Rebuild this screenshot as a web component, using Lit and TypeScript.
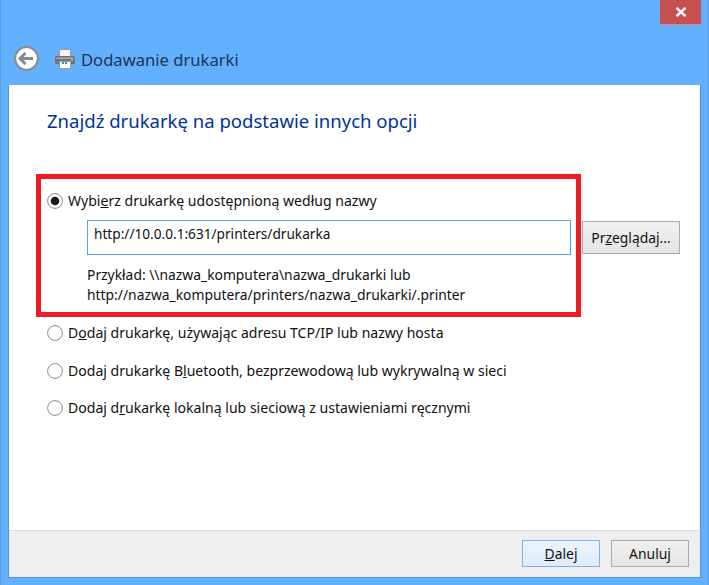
import { LitElement, html, css, svg } from "lit";
import { customElement } from "lit/decorators.js";

@customElement("app-root")
export class AppRoot extends LitElement {
  static styles = css`
    :host { display: block; width: 709px; height: 585px; overflow: hidden; font-family: "Noto Sans", "Open Sans", sans-serif; }
    .win { box-sizing: border-box; width: 709px; height: 585px; background: #63b0fe; border-left: 1px solid #5a9fe0; border-right: 1px solid #5a9fe0; display: flex; flex-direction: column; }
    .titlebar { height: 25px; display: flex; justify-content: flex-end; padding-right: 7px; flex: none; }
    .close { width: 41px; height: 25px; background: #c75050; border-bottom: 1px solid #d98a8a; box-sizing: border-box; display: flex; align-items: center; justify-content: center; }
    .nav { height: 60px; flex: none; display: flex; align-items: center; padding: 7px 0 0 13px; box-sizing: border-box; }
    .back { width: 25px; height: 25px; display: block; }
    .printer { width: 20px; height: 20px; margin-left: 16px; display: block; }
    .nav-title { font-size: 16.6px; color: #1f3550; margin-left: 6px; margin-top: 2px; }
    .panel { flex: 1; margin: 0 7px 7px 7px; background: #fff; border: 1px solid #4f93d8; border-top: none; display: flex; flex-direction: column; position: relative; }
    .body { flex: 1; padding: 21px 0 0 38px; box-sizing: border-box; }
    h1 { margin: 0; font-weight: 400; font-size: 18.55px; line-height: 30px; color: #003399; }
    .rows { margin-top: 55px; display: flex; flex-direction: column; }
    .opt { display: flex; align-items: center; gap: 5px; font-size: 14.05px; line-height: 20px; color: #111; height: 20px; }
    .radio { width: 16px; height: 16px; flex: none; display: block; }
    u { text-underline-offset: 1px; text-decoration-thickness: 1px; }
    .detail { padding-left: 40px; margin-top: 9px; }
    .entry { display: flex; align-items: flex-start; }
    .input { box-sizing: border-box; width: 484px; height: 35px; border: 1px solid #5aa2e6; font-size: 13.65px; padding: 0 6px 8px; display: flex; align-items: center; color: #111; }
    .browse { margin-left: 11px; margin-top: 1px; width: 98px; height: 33px; }
    .btn { box-sizing: border-box; border: 1px solid #acacac; background: linear-gradient(#f0f0f0, #e5e5e5); display: flex; align-items: center; justify-content: center; font-size: 13.9px; color: #111; }
    .hint { margin-top: 10px; font-size: 13.85px; line-height: 20px; color: #111; }
    .rest { display: flex; flex-direction: column; gap: 17.5px; margin-top: 18px; }
    .footer { height: 47px; flex: none; box-sizing: border-box; background: #eeeeee; border-top: 1px solid #dfdfdf; display: flex; justify-content: flex-end; gap: 11px; padding: 9px 11px 0 0; }
    .footer .btn { width: 78px; height: 27px; }
    .primary { border-color: #7eb4ea; background: linear-gradient(#ecf4fc, #dcecfc); }
    .mark { position: absolute; left: 27px; top: 89px; width: 545px; height: 143px; box-sizing: border-box; border: 5px solid #ed1c24; pointer-events: none; }
  `;

  radio(on: boolean) {
    return html`<svg class="radio" viewBox="0 0 16 16">
      <circle cx="8" cy="8" r="7.4" fill="#fff" stroke="#8a8a8a" stroke-width="1"></circle>
      ${on ? svg`<circle cx="8" cy="8" r="4.3" fill="#1a1a1a"></circle>` : ""}
    </svg>`;
  }

  render() {
    return html`
      <div class="win">
        <div class="titlebar">
          <div class="close">
            <svg width="12" height="10" viewBox="0 0 12 10"><path d="M1.5 0.8 L10.5 9.2 M10.5 0.8 L1.5 9.2" stroke="#fff" stroke-width="2.4" fill="none"></path></svg>
          </div>
        </div>
        <div class="nav">
          <svg class="back" viewBox="0 0 25 25">
            <circle cx="12.5" cy="12.5" r="11.4" fill="#fff" stroke="#8c8c8c" stroke-width="2"></circle>
            <path d="M6 12.5 H19 M11.5 7 L6 12.5 L11.5 18" fill="none" stroke="#8a8a8a" stroke-width="3"></path>
          </svg>
          <svg class="printer" viewBox="0 0 20 20">
            <rect x="4.5" y="0.5" width="11" height="7" fill="#f4f4f4" stroke="#9a9a9a"></rect>
            <rect x="0" y="7" width="20" height="8" rx="1.5" fill="#6d7478"></rect>
            <rect x="1.5" y="8.5" width="17" height="1.5" fill="#aab0b3"></rect>
            <rect x="16" y="10.5" width="2" height="1.5" fill="#7fe07f"></rect>
            <rect x="4.5" y="12.5" width="11" height="7" fill="#fff" stroke="#9a9a9a"></rect>
            <rect x="7" y="13" width="2" height="2" fill="#2f8fd0"></rect>
            <rect x="10" y="13" width="2" height="2" fill="#2f8fd0"></rect>
          </svg>
          <span class="nav-title">Dodawanie drukarki</span>
        </div>
        <div class="panel">
          <div class="body">
            <h1>Znajdź drukarkę na podstawie innych opcji</h1>
            <div class="rows">
              <div class="opt">${this.radio(true)}<span>Wybi<u>e</u>rz drukarkę udostępnioną według nazwy</span></div>
              <div class="detail">
                <div class="entry">
                  <div class="input">http://10.0.0.1:631/printers/drukarka</div>
                  <div class="btn browse"><span>Pr<u>z</u>eglądaj...</span></div>
                </div>
                <div class="hint">Przykład: \\\\nazwa_komputera\\nazwa_drukarki lub<br />http://nazwa_komputera/printers/nazwa_drukarki/.printer</div>
              </div>
              <div class="rest">
                <div class="opt">${this.radio(false)}<span>D<u>o</u>daj drukarkę, używając adresu TCP/IP lub nazwy hosta</span></div>
                <div class="opt">${this.radio(false)}<span>Dodaj drukarkę B<u>l</u>uetooth, bezprzewodową lub wykrywalną w sieci</span></div>
                <div class="opt">${this.radio(false)}<span>Dodaj d<u>r</u>ukarkę lokalną lub sieciową z ustawieniami ręcznymi</span></div>
              </div>
            </div>
          </div>
          <div class="footer">
            <div class="btn primary"><span><u>D</u>alej</span></div>
            <div class="btn"><span>Anuluj</span></div>
          </div>
          <div class="mark"></div>
        </div>
      </div>
    `;
  }
}
